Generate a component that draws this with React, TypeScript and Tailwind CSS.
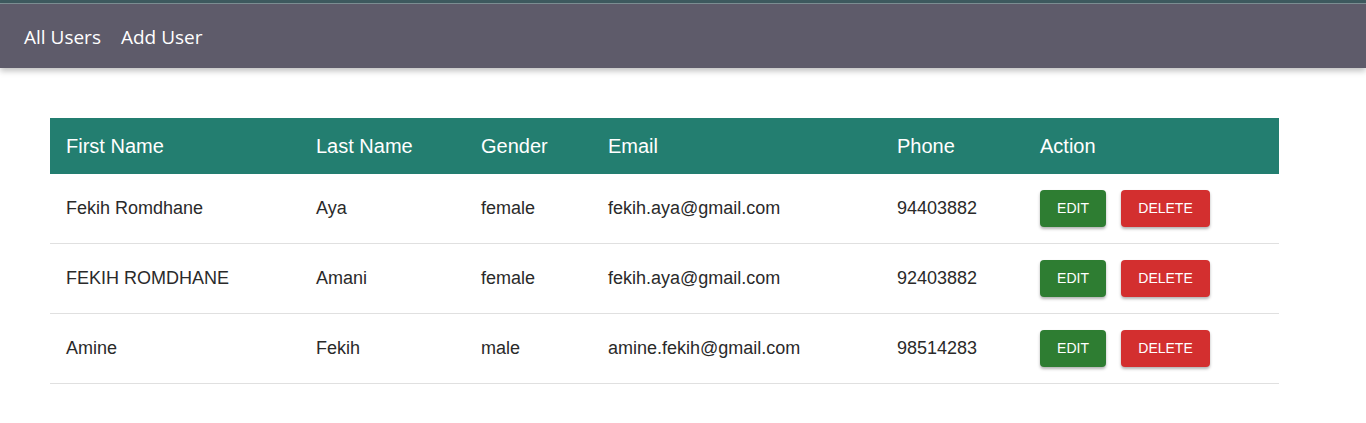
import React from "react";

const rows = [
  { first: "Fekih Romdhane", last: "Aya", gender: "female", email: "fekih.aya@gmail.com", phone: "94403882" },
  { first: "FEKIH ROMDHANE", last: "Amani", gender: "female", email: "fekih.aya@gmail.com", phone: "92403882" },
  { first: "Amine", last: "Fekih", gender: "male", email: "amine.fekih@gmail.com", phone: "98514283" },
];

export default function App() {
  return (
    <div className="min-h-[423px] bg-white">
      <div className="h-[3px] bg-[#3e5a5f]" />
      <div className="h-px bg-[#7f9296]" />
      <nav className="flex h-[64px] items-center gap-[20px] bg-[#5e5b6a] px-[24px] pt-[2px] text-[19px] text-white shadow-[0_3px_6px_rgba(0,0,0,0.25)] [font-family:'Open_Sans',sans-serif]">
        <span>All Users</span>
        <span>Add User</span>
      </nav>
      <div className="px-[50px] pt-[50px] pr-[87px] [font-family:'Liberation_Sans',Arial,sans-serif]">
        <div className="grid grid-cols-[250px_165px_127px_289px_143px_1fr] items-center bg-[#237e70] h-[56px] text-[20px] text-white">
          <div className="pl-[16px]">First Name</div>
          <div className="pl-[16px]">Last Name</div>
          <div className="pl-[16px]">Gender</div>
          <div className="pl-[16px]">Email</div>
          <div className="pl-[16px]">Phone</div>
          <div className="pl-[16px]">Action</div>
        </div>
        {rows.map((r, i) => (
          <div
            key={i}
            className="grid grid-cols-[250px_165px_127px_289px_143px_1fr] items-center h-[70px] border-b border-[#e0e0e0] text-[18px] text-[#2a2a2a]"
          >
            <div className="pl-[16px]">{r.first}</div>
            <div className="pl-[16px]">{r.last}</div>
            <div className="pl-[16px]">{r.gender}</div>
            <div className="pl-[16px]">{r.email}</div>
            <div className="pl-[16px]">{r.phone}</div>
            <div className="pl-[16px] flex gap-[15px]">
              <button className="h-[37px] w-[66px] rounded-[4px] bg-[#2e7d32] text-[14px] text-white uppercase shadow-[0_2px_3px_rgba(0,0,0,0.3)]">
                Edit
              </button>
              <button className="h-[37px] w-[89px] rounded-[4px] bg-[#d32f2f] text-[14px] text-white uppercase shadow-[0_2px_3px_rgba(0,0,0,0.3)]">
                Delete
              </button>
            </div>
          </div>
        ))}
      </div>
    </div>
  );
}
